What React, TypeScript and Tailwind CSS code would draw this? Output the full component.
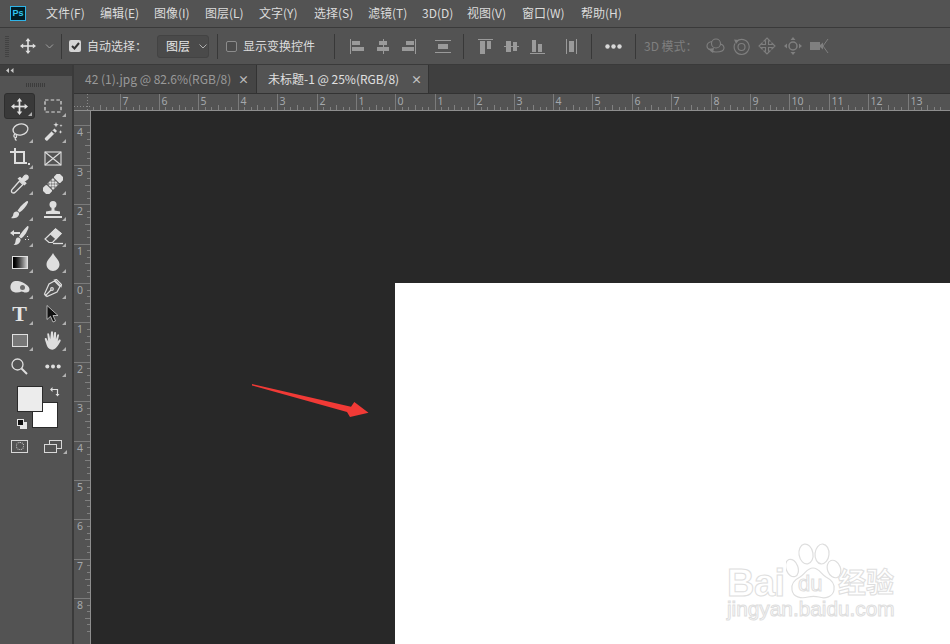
import type { ReactNode } from 'react';

const ui = "font-['Noto_Sans_CJK_SC','Noto_Sans',sans-serif]";

const menus = [
  ['文件(F)', 46],
  ['编辑(E)', 100],
  ['图像(I)', 154],
  ['图层(L)', 205],
  ['文字(Y)', 259],
  ['选择(S)', 314],
  ['滤镜(T)', 368],
  ['3D(D)', 422],
  ['视图(V)', 467],
  ['窗口(W)', 522],
  ['帮助(H)', 581],
] as const;

function MoveIcon({ size = 20, color = '#e0e0e0' }: { size?: number; color?: string }) {
  return (
    <svg width={size} height={size} viewBox="0 0 20 20" fill={color}>
      <rect x="9" y="3" width="2" height="14" />
      <rect x="3" y="9" width="14" height="2" />
      <path d="M10 0l3.2 4H6.800zM10 20l-3.200-4h6.400zM0 10l4-3.200v6.400zM20 10l-4 3.200V6.800z" />
    </svg>
  );
}

function Sep() {
  return <div className="w-px h-[25px] bg-[#383838] shrink-0" />;
}

function AlignIcons() {
  const c = '#9a9a9a';
  return (
    <>
      <svg className="ml-[15px]" width="15" height="15" viewBox="0 0 15 15" fill={c}>
        <rect x="0" y="0" width="1" height="15" /><rect x="2" y="2" width="8" height="4" /><rect x="2" y="8" width="12" height="4" />
      </svg>
      <svg className="ml-[12px]" width="13" height="15" viewBox="0 0 13 15" fill={c}>
        <rect x="6" y="0" width="1" height="15" /><rect x="2" y="2" width="8" height="4" /><rect x="0" y="8" width="12" height="4" />
      </svg>
      <svg className="ml-[11px]" width="15" height="15" viewBox="0 0 15 15" fill={c}>
        <rect x="14" y="0" width="1" height="15" /><rect x="5" y="2" width="8" height="4" /><rect x="1" y="8" width="12" height="4" />
      </svg>
      <svg className="ml-[19px]" width="17" height="15" viewBox="0 0 17 15" fill={c}>
        <rect x="0" y="1" width="16" height="1" /><rect x="3" y="5" width="10" height="5" /><rect x="0" y="13" width="16" height="1" />
      </svg>
    </>
  );
}

function DistIcons() {
  const c = '#9a9a9a';
  return (
    <>
      <svg className="ml-[14px]" width="15" height="15" viewBox="0 0 15 15" fill={c}>
        <rect x="0" y="0" width="15" height="1" /><rect x="2" y="2" width="5" height="13" /><rect x="9" y="2" width="4" height="8" />
      </svg>
      <svg className="ml-[11px]" width="15" height="15" viewBox="0 0 15 15" fill={c}>
        <rect x="0" y="7" width="15" height="1" /><rect x="2" y="2" width="5" height="11" /><rect x="9" y="3" width="4" height="9" />
      </svg>
      <svg className="ml-[11px]" width="15" height="15" viewBox="0 0 15 15" fill={c}>
        <rect x="0" y="14" width="15" height="1" /><rect x="2" y="1" width="4" height="12" /><rect x="8" y="5" width="4" height="8" />
      </svg>
      <svg className="ml-[21px]" width="11" height="15" viewBox="0 0 11 15" fill={c}>
        <rect x="0" y="0" width="1" height="15" /><rect x="3" y="2" width="5" height="11" /><rect x="10" y="0" width="1" height="15" />
      </svg>
    </>
  );
}

function Mode3D() {
  const c = '#7f7f7f';
  return (
    <>
      <svg className="ml-[13px]" width="19" height="16" viewBox="0 0 19 16" fill="none" stroke={c} strokeWidth="1.100">
        <circle cx="10" cy="5.500" r="4.500" />
        <path d="M6 3.500C3 4 1 5.500 1 8c0 1.500 1 3 3 3.500M14 6c2.500.5 4 2 4 4 0 3-4 4-8 4-2 0-4-.5-5.500-1.500" />
        <path d="M2 11l6-1-1 5z" fill={c} stroke="none" />
      </svg>
      <svg className="ml-[8px]" width="17" height="17" viewBox="0 0 17 17" fill="none" stroke={c} strokeWidth="1.100">
        <circle cx="8.500" cy="9" r="3.500" />
        <path d="M3.500 3.500a7.500 7.500 0 1 1-1.500 2" />
        <path d="M1 1.500l5 .5-3 4z" fill={c} stroke="none" />
      </svg>
      <svg className="ml-[8px]" width="18" height="18" viewBox="0 0 18 18" fill="none" stroke={c} strokeWidth="1.100">
        <path d="M9 1l3 3h-1.500v3.500H14V6l3 3-3 3v-1.500h-3.500V14H12l-3 3-3-3h1.500v-3.500H4V12L1 9l3-3v1.500h3.500V4H6z" />
      </svg>
      <svg className="ml-[8px]" width="18" height="18" viewBox="0 0 18 18" fill={c}>
        <path d="M9 0l2.500 3h-5zM9 18l-2.500-3h5zM0 9l3-2.500v5zM18 9l-3 2.500v-5z" />
        <circle cx="9" cy="9" r="4" fill="none" stroke={c} strokeWidth="1.500" />
      </svg>
      <svg className="ml-[8px]" width="19" height="16" viewBox="0 0 19 16" fill={c}>
        <rect x="0" y="4" width="10" height="8" />
        <path d="M10 7l3-2.500v7L10 9z" />
        <path d="M18 1l-5 7 5 7" fill="none" stroke={c} strokeWidth="1" />
      </svg>
    </>
  );
}

const w = '#dedede';

const tools: ReactNode[] = [
  <MoveIcon key="move" size={17} />,
  <svg key="marquee" width="18" height="14" viewBox="0 0 18 14" fill="none" stroke={w} strokeWidth="1.200" strokeDasharray="3.500 2.200">
    <rect x="1" y="1" width="16" height="12" />
  </svg>,
  <svg key="lasso" width="20" height="20" viewBox="0 0 20 20" fill="none" stroke={w} strokeWidth="1.300">
    <ellipse cx="10.500" cy="7.500" rx="7.500" ry="5.500" transform="rotate(-12 10.500 7.500)" />
    <path d="M5 12c-1.500 1-1.500 3 0 3.500 1.500.5 2-1 1-2.500M5 15c0 1.500.5 3 1.500 3.500" />
  </svg>,
  <svg key="wand" width="20" height="20" viewBox="0 0 20 20" fill={w}>
    <path d="M11.500 6.500l2.500 2.500L4.500 18.500c-1 1-3.500-1.500-2.500-2.500z" />
    <path d="M9.800 8.200l2.500 2.500-1.200 1.200-2.500-2.500z" fill="#535353" />
    <path d="M13 0l.7 2 2 .7-2 .7-.7 2-.7-2-2-.7 2-.7zM18 2l.4 1.200 1.200.4-1.200.4-.4 1.200-.4-1.200-1.200-.4 1.200-.4zM17.500 8l.5 1.400 1.400.5-1.400.5-.5 1.400-.5-1.400-1.400-.5 1.400-.5z" />
  </svg>,
  <svg key="crop" width="20" height="20" viewBox="0 0 20 20" fill="none" stroke={w} strokeWidth="2">
    <path d="M0 4h14v12M5 0v15h12" />
    <rect x="18" y="15" width="2" height="2" fill={w} stroke="none" />
  </svg>,
  <svg key="frame" width="18" height="15" viewBox="0 0 18 15" fill="none" stroke={w} strokeWidth="1.100">
    <rect x="1" y="1" width="16" height="13" />
    <path d="M1 1l16 13M17 1L1 14" />
  </svg>,
  <svg key="dropper" width="20" height="20" viewBox="0 0 20 20" fill="none" stroke={w} strokeWidth="1.300">
    <path d="M9.500 7L13 10.500 5.500 18c-1 1-2.500 1.200-3.500.5-.8-1-.5-2.500.5-3.500z" />
    <path d="M10 3.500l1.800 1.800 2.200-3c1-1.300 2.500-1.500 3.500-.5s.8 2.500-.5 3.500l-3 2.200 1.800 1.800-1.300 1.300-6-6z" fill={w} />
  </svg>,
  <svg key="heal" width="20" height="20" viewBox="0 0 20 20" fill={w}>
    <g transform="rotate(45 10 10)">
      <rect x="5.500" y="-2" width="9" height="7" rx="1.500" />
      <rect x="5.500" y="15" width="9" height="7" rx="1.500" />
      <rect x="5.500" y="6" width="9" height="8" fill="#8a8a8a" />
      <path d="M6 6h2v2H6zM10 6h2v2h-2zM8 8h2v2H8zM12 8h2v2h-2zM6 10h2v2H6zM10 10h2v2h-2zM8 12h2v2H8zM12 12h2v2h-2z" />
    </g>
  </svg>,
  <svg key="brush" width="18" height="18" viewBox="0 0 18 18" fill={w}>
    <path d="M16 0c.8 0 1.300.7 1 1.500C15.500 5 12 9 8.500 11.500L6.500 9.500C9 6 13 1.500 16 0z" />
    <path d="M5.500 10.500c1.800 0 3 1.500 2.500 3.200C7.300 16.500 3 18 0 17c1.500-1 2-2.200 2.300-3.800.3-1.700 1.500-2.700 3.200-2.700z" />
  </svg>,
  <svg key="stamp" width="18" height="18" viewBox="0 0 18 18" fill={w}>
    <circle cx="9" cy="3.500" r="3.500" />
    <path d="M7.500 6h3v3.500l5.500 1V13H2v-2.500l5.500-1z" />
    <rect x="0" y="15" width="18" height="2" />
  </svg>,
  <svg key="history" width="20" height="20" viewBox="0 0 20 20" fill={w}>
    <path d="M17.500 0c.8 0 1.300.7 1 1.500-1 3.500-3.500 8.500-7.500 11l-2-2c2.500-4 5.500-8 8.500-10.500z" />
    <path d="M8 11.500c1.800 0 3 1.500 2.500 3.200-.7 2.800-4 4.800-7 4.300 1.500-1 1.800-2.500 2-3.800.2-2 1-3.700 2.500-3.700z" />
    <path d="M0 7l4-3v2h6v2H4v2z" />
    <path d="M17 10h1v1h-1zM15 13h1v1h-1zM18 13h1v1h-1z" />
  </svg>,
  <svg key="eraser" width="20" height="17" viewBox="0 0 20 17" fill="none" stroke={w} strokeWidth="1.200">
    <path d="M12.500 1l5.500 4.500-8.500 9H6L2 11z" />
    <path d="M12.500 1l5.500 4.500-5 5.500-5.500-5z" fill={w} />
    <path d="M10 15.500h10" strokeWidth="1.300" />
  </svg>,
  <div key="gradient" className="w-[16px] h-[13px] border border-[#e0e0e0] bg-gradient-to-r from-black to-[#d0d0d0]" />,
  <svg key="blur" width="14" height="18" viewBox="0 0 14 18" fill={w}>
    <path d="M7 0c1.500 3.500 6.500 7 6.500 11.500C13.500 15 10.500 18 7 18s-6.500-3-6.500-6.500C.5 7 5.500 3.500 7 0z" />
  </svg>,
  <svg key="burn" width="20" height="14" viewBox="0 0 20 14" fill={w}>
    <path d="M5 0c4-.5 8 1 11 3.500 2 1 3.500 3 3.500 5 0 2-2 3.500-4 3-1.500 0-2.500-.7-4-1-3 1.500-8 1.500-10-1C-.5 7 0 1 5 0z" />
    <circle cx="12.500" cy="6.500" r="2.500" fill="#6b6b6b" />
  </svg>,
  <svg key="pen" width="19" height="19" viewBox="0 0 19 19" fill="none" stroke={w} strokeWidth="1.200">
    <path d="M11.500 2L17 7.500 14 13 4 17.500 1.500 15 6 5z" />
    <path d="M11.500 1l2-.5 5 5-.5 2zM2 17l6-6" />
    <circle cx="9" cy="10" r="1.300" />
  </svg>,
  <span key="type" className="font-['Liberation_Serif',serif] font-bold text-[22px] leading-none text-[#e4e4e4]">T</span>,
  <svg key="path" width="14" height="18" viewBox="0 0 14 18">
    <path d="M1 0.500v14l3.500-3.200 2.500 5.700 2.500-1-2.500-5.500h5z" fill="#111" stroke="#cfcfcf" strokeWidth=".8" />
  </svg>,
  <div key="rect" className="w-[16px] h-[13px] border border-[#e0e0e0] bg-[#777777]" />,
  <svg key="hand" width="18" height="19" viewBox="0 0 18 19" fill={w}>
    <path d="M7 1c.6-1 1.800-.8 2 .2l.5 6 .6-5.500c.2-1.200 2-1 2 .2l-.2 6.300 1.400-4.300c.4-1 1.900-.6 1.700.5l-1.300 6 1-1.400c.8-1 2.500-.2 1.900 1-1.200 2.500-2.700 4.800-4.100 6.300C11.200 18 9 19 7 18.500c-2.500-.5-3.800-2.500-4.500-5L.8 8.200C.5 7 2 6.400 2.600 7.400l1.600 3-.9-7.200c-.1-1.200 1.500-1.400 1.800-.3l1.100 5.300z" />
  </svg>,
  <svg key="zoom" width="17" height="17" viewBox="0 0 17 17" fill="none" stroke={w}>
    <circle cx="6.500" cy="6.500" r="5.500" strokeWidth="1.300" />
    <path d="M10.500 10.500l5.500 5.500" strokeWidth="2" />
  </svg>,
  <svg key="more" width="16" height="5" viewBox="0 0 16 5" fill={w}>
    <circle cx="2.300" cy="2.500" r="2" /><circle cx="8" cy="2.500" r="2" /><circle cx="13.700" cy="2.500" r="2" />
  </svg>,
];

function ToolCell({ children, active, corner = true }: { children: ReactNode; active?: boolean; corner?: boolean }) {
  return (
    <div
      className={
        'relative h-[26px] flex items-center justify-center ' +
        (active ? 'rounded-[3px] bg-[#393939] border border-[#2e2e2e]' : '')
      }
    >
      {children}
      {corner && (
        <div className="absolute right-[2px] bottom-[2px] w-0 h-0 border-l-[4px] border-l-transparent border-b-[4px] border-b-[#b0b0b0]" />
      )}
    </div>
  );
}

function Toolbar() {
  return (
    <div className="w-[72px] shrink-0 bg-[#535353] flex flex-col">
      <div className="h-[11px] bg-[#3e3e3e] flex items-center pl-[6px] text-[#c8c8c8]">
        <svg width="8" height="5" viewBox="0 0 8 5" fill="currentColor">
          <path d="M3 0v5L0 2.500zM7.500 0v5l-3-2.500z" />
        </svg>
      </div>
      <div className="h-[17px] flex items-center justify-center">
        <div className="w-[20px] h-[4px] bg-[repeating-linear-gradient(90deg,#3c3c3c_0,#3c3c3c_1px,transparent_1px,transparent_2px)]" />
      </div>
      <div className="grid grid-cols-[31px_31px] gap-x-[2px] pl-[4px]">
        {tools.map((t, i) => (
          <ToolCell key={i} active={i === 0} corner={i !== 5 && i !== 20}>
            {t}
          </ToolCell>
        ))}
      </div>
      <div className="relative h-[44px] mt-[7px]">
        <div className="absolute left-[32px] top-[16px] w-[26px] h-[26px] bg-white border border-[#2b2b2b]" />
        <div className="absolute left-[17px] top-0 w-[26px] h-[26px] bg-[#ececec] border border-[#2b2b2b]" />
        <svg className="absolute left-[49px] top-0" width="11" height="11" viewBox="0 0 11 11" fill="none" stroke="#e0e0e0" strokeWidth="1.200">
          <path d="M2 3.500h6.500v5.500" />
          <path d="M3.500 1L1 3.500 3.500 6zM6.500 8h4L8.500 10.500z" fill="#e0e0e0" stroke="none" />
        </svg>
        <div className="absolute left-[20px] top-[36px] w-[7px] h-[7px] bg-[#e6e6e6]" />
        <div className="absolute left-[17px] top-[33px] w-[7px] h-[7px] bg-[#111111] border border-[#e6e6e6]" />
      </div>
      <div className="grid grid-cols-[31px_31px] gap-x-[2px] pl-[4px] mt-[8px]">
        <div className="h-[16px] flex items-center justify-center">
          <div className="w-[17px] h-[13px] border border-[#d8d8d8] flex items-center justify-center">
            <div className="w-[8px] h-[8px] rounded-full border border-dotted border-[#d8d8d8]" />
          </div>
        </div>
        <div className="relative h-[16px] flex items-center justify-center">
          <svg width="18" height="13" viewBox="0 0 18 13" fill="#535353" stroke="#d8d8d8" strokeWidth="1">
            <rect x="5.500" y=".5" width="12" height="8" />
            <rect x=".5" y="4.500" width="12" height="8" />
          </svg>
          <div className="absolute right-[1px] bottom-0 w-0 h-0 border-l-[4px] border-l-transparent border-b-[4px] border-b-[#b0b0b0]" />
        </div>
      </div>
    </div>
  );
}

const hMajors = Array.from({ length: 22 }, (_, i) => i - 8);

function HRuler() {
  // x = 395.3 + 39.4 * n in page coords, svg starts at x 74
  const ticks: ReactNode[] = [];
  hMajors.forEach((n) => {
    const x = Math.round(395.3 + 39.4 * n - 74) + 0.5;
    ticks.push(<line key={'m' + n} x1={x} x2={x} y1={0} y2={16} stroke="#7b7b7b" />);
    for (let k = 1; k < 6; k++) {
      const mx = Math.round(395.3 + 39.4 * (n + k / 6) - 74) + 0.5;
      ticks.push(<line key={n + '-' + k} x1={mx} x2={mx} y1={k === 3 ? 11 : 13} y2={16} stroke="#808080" />);
    }
    ticks.push(
      <text key={'t' + n} x={x + 2} y={11} fontSize="10.500" fill="#a4a8ac" fontFamily="Noto Sans, sans-serif">
        {Math.abs(n)}
      </text>,
    );
  });
  return (
    <svg width="876" height="17" className="block">
      {ticks}
      <rect x="0" y="0" width="16" height="17" fill="#535353" />
      <path d="M0 12.500h16M13.500 0v16" stroke="#8a8a8a" strokeDasharray="1 2" />
      <line x1="0" x2="876" y1="16.500" y2="16.500" stroke="#8e8e8e" />
    </svg>
  );
}

function VRuler() {
  const ticks: ReactNode[] = [];
  for (let n = -4; n <= 8; n++) {
    const y = Math.round(283 + 39.4 * n - 111) + 0.5;
    ticks.push(<line key={'m' + n} x1={0} x2={17} y1={y} y2={y} stroke="#7b7b7b" />);
    for (let k = 1; k < 6; k++) {
      const my = Math.round(283 + 39.4 * (n + k / 6) - 111) + 0.5;
      ticks.push(<line key={n + '-' + k} x1={k === 3 ? 11 : 13} x2={16} y1={my} y2={my} stroke="#808080" />);
    }
    ticks.push(
      <text key={'t' + n} x={3} y={y + 10} fontSize="10.500" fill="#a4a8ac" fontFamily="Noto Sans, sans-serif">
        {Math.abs(n)}
      </text>,
    );
  }
  return (
    <svg width="17" height="533" className="block shrink-0">
      {ticks}
      <line x1="16.500" x2="16.500" y1="0" y2="533" stroke="#8e8e8e" />
    </svg>
  );
}

function Watermark() {
  const stroke = 'text-white [-webkit-text-stroke:1px_#dedede]';
  return (
    <div className="absolute left-[332px] top-[253px] w-[180px] h-[90px] font-['Liberation_Sans',sans-serif] select-none">
      <svg className="absolute left-[59px] top-[7px]" width="56" height="60" viewBox="0 0 56 60" fill="white" stroke="#dedede" strokeWidth="1.200">
        <ellipse cx="6" cy="25" rx="6" ry="9" transform="rotate(-20 6 25)" />
        <ellipse cx="20" cy="11" rx="7" ry="10" transform="rotate(-10 20 11)" />
        <ellipse cx="36" cy="11" rx="7" ry="10" transform="rotate(5 36 11)" />
        <ellipse cx="48" cy="26" rx="6.500" ry="9" transform="rotate(-20 48 26)" />
        <path d="M27 25c6 0 8 6 13 9 6 3 9 8 8 13-1 7-9 9-15 7-4-1-7-1-11 0-7 2-15 0-16-7-1-5 2-10 8-13 5-3 7-9 13-9z" />
      </svg>
      <span className={`absolute left-0 top-[32px] text-[38px] leading-[30px] font-bold tracking-[-0.5px] ${stroke}`}>Bai</span>
      <span className={`absolute left-[71px] top-[37px] text-[22px] leading-none ${stroke}`}>du</span>
      <span className={`absolute left-[111px] top-[31px] text-[28px] leading-none font-bold font-['Noto_Sans_CJK_SC',sans-serif] ${stroke}`}>经验</span>
      <span className={`absolute left-0 top-[63px] text-[20.800px] leading-none ${stroke}`}>jingyan.baidu.com</span>
    </div>
  );
}

export default function App() {
  return (
    <div className={`w-[950px] h-[644px] overflow-hidden flex flex-col bg-[#535353] text-[12px] text-[#dcdcdc] ${ui}`}>
      {/* menu */}
      <div className="relative h-[28px] shrink-0 flex items-center border-b border-[#3a3a3a]">
        <div className="absolute left-[10px] top-[6px] w-[16px] h-[15px] bg-[#001d26] border border-[#2fb4e8] flex items-center justify-center">
          <span className="font-['Liberation_Sans',sans-serif] font-bold text-[9px] leading-none text-[#31c5f0]">Ps</span>
        </div>
        {menus.map(([m, x]) => (
          <span key={m} className="absolute top-[3px] leading-[20px] whitespace-nowrap" style={{ left: x }}>
            {m}
          </span>
        ))}
      </div>

      {/* options */}
      <div className="h-[37px] shrink-0 flex items-center border-b border-[#3a3a3a]">
        <div className="ml-[5px] w-[4px] h-[22px] bg-[repeating-linear-gradient(0deg,#424242_0,#424242_1px,transparent_1px,transparent_2px)]" />
        <div className="ml-[11px]"><MoveIcon size={16} /></div>
        <svg className="ml-[9px]" width="9" height="5" viewBox="0 0 9 5" fill="none" stroke="#a0a0a0"><path d="M1 .5l3.500 3.500L8 .5" /></svg>
        <div className="ml-[7px]"><Sep /></div>
        <div className="ml-[7px] w-[12px] h-[12px] rounded-[2px] bg-[#d4d4d4] flex items-center justify-center">
          <svg width="9" height="8" viewBox="0 0 9 8" fill="none" stroke="#333333" strokeWidth="2"><path d="M1 4l2.500 2.500L8 1" /></svg>
        </div>
        <span className="ml-[6px] w-[70px] whitespace-nowrap">自动选择：</span>
        <div className="w-[52px] h-[23px] rounded-[3px] border border-[#434343] bg-[#4a4a4a] flex items-center pl-[8px] gap-[9px] text-[#e6e6e6]">
          <span>图层</span>
          <svg width="8" height="5" viewBox="0 0 8 5" fill="none" stroke="#b0b0b0"><path d="M.5 .5L4 4 7.500 .5" /></svg>
        </div>
        <div className="ml-[8px]"><Sep /></div>
        <div className="ml-[8px] w-[11px] h-[11px] rounded-[2px] border border-[#8c8c8c] bg-[#4c4c4c]" />
        <span className="ml-[6px] whitespace-nowrap w-[91px]">显示变换控件</span>
        <Sep />
        <AlignIcons />
        <div className="ml-[11px]"><Sep /></div>
        <DistIcons />
        <div className="ml-[14px]"><Sep /></div>
        <svg className="ml-[13px]" width="17" height="5" viewBox="0 0 17 5" fill="#d8d8d8">
          <circle cx="2.500" cy="2.500" r="2.200" /><circle cx="8.500" cy="2.500" r="2.200" /><circle cx="14.500" cy="2.500" r="2.200" />
        </svg>
        <div className="ml-[13px]"><Sep /></div>
        <span className="ml-[8px] w-[49px] whitespace-nowrap text-[#7f7f7f]">3D 模式：</span>
        <Mode3D />
      </div>

      <div className="flex-1 min-h-0 flex">
        <Toolbar />
        <div className="w-[2px] shrink-0 bg-[#3a3a3a]" />
        <div className="flex-1 min-w-0 flex flex-col">
          {/* tabs */}
          <div className="h-[29px] shrink-0 bg-[#3f3f3f] flex border-b border-[#333333]">
            <div className="w-[183px] bg-[#454545] border-r border-[#333333] flex items-center pl-[11px] text-[#999999]">
              <span className="w-[153px] whitespace-nowrap">42 (1).jpg @ 82.6%(RGB/8)</span>
              <span className="text-[11px] leading-none font-bold text-[#bbbbbb]">×</span>
            </div>
            <div className="w-[172px] bg-[#535353] border-r border-[#333333] flex items-center pl-[11px] text-[#e0e0e0]">
              <span className="w-[143px] whitespace-nowrap">未标题-1 @ 25%(RGB/8)</span>
              <span className="text-[11px] leading-none font-bold text-[#c4c4c4]">×</span>
            </div>
          </div>
          <div className="h-[17px] shrink-0 bg-[#535353]">
            <HRuler />
          </div>
          <div className="flex-1 min-h-0 flex">
            <VRuler />
            {/* canvas */}
            <div className="relative flex-1 min-w-0 bg-[#282828] overflow-hidden pl-[304px] pt-[172px]">
              <div className="relative h-[400px] bg-white">
                <Watermark />
              </div>
              <svg className="absolute left-[160px] top-[272px]" width="120" height="36" viewBox="0 0 120 36" fill="#f13a36">
                <path d="M1 1L100 23.700 103.300 19 117.500 29.700 99 34 96 29 1 2.500z" />
              </svg>
            </div>
          </div>
        </div>
      </div>
    </div>
  );
}
